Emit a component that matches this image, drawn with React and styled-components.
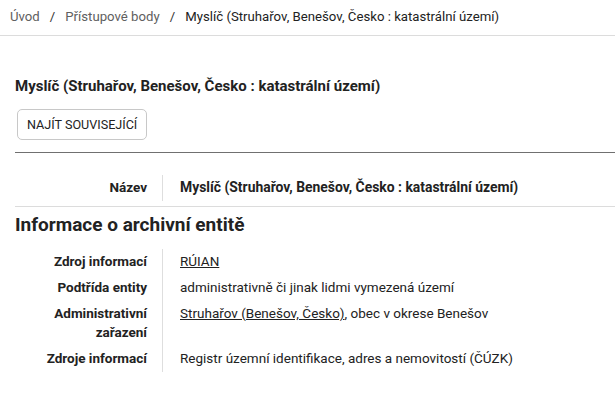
import React from "react";
import styled, { createGlobalStyle } from "styled-components";

const GlobalStyle = createGlobalStyle`
  body {
    margin: 0;
    background: #fff;
    font-family: Roboto, "Liberation Sans", Arial, sans-serif;
    color: #222;
  }
`;

const crumbs = ["Úvod", "Přístupové body"];
const title = "Myslíč (Struhařov, Benešov, Česko : katastrální území)";

export default function App() {
  const info = [
    { label: "Zdroj informací", value: <Link>RÚIAN</Link> },
    { label: "Podtřída entity", value: "administrativně či jinak lidmi vymezená území" },
    {
      label: "Administrativní zařazení",
      value: (
        <>
          <Link>Struhařov (Benešov, Česko)</Link>, obec v okrese Benešov
        </>
      ),
    },
    { label: "Zdroje informací", value: "Registr územní identifikace, adres a nemovitostí (ČÚZK)" },
  ];

  return (
    <>
      <GlobalStyle />
      <Breadcrumbs>
        {crumbs.map((c) => (
          <React.Fragment key={c}>
            <Crumb>{c}</Crumb>
            <Sep>/</Sep>
          </React.Fragment>
        ))}
        <Crumb $current>{title}</Crumb>
      </Breadcrumbs>
      <Main>
        <Title>{title}</Title>
        <Button>NAJÍT SOUVISEJÍCÍ</Button>
        <Rule />
        <NameTable>
          <Row>
            <Label>Název</Label>
            <Value $bold>{title}</Value>
          </Row>
        </NameTable>
        <Section>Informace o archivní entitě</Section>
        <InfoTable>
          {info.map((r) => (
            <Row key={r.label}>
              <Label>{r.label}</Label>
              <Value>{r.value}</Value>
            </Row>
          ))}
        </InfoTable>
      </Main>
    </>
  );
}

const Breadcrumbs = styled.nav`
  display: flex;
  align-items: center;
  gap: 10px;
  height: 36px;
  padding: 0 10px 3px;
  box-sizing: border-box;
  border-bottom: 1px solid #dcdcdc;
  font-size: 13.2px;
`;

const Crumb = styled.span`
  color: ${({ $current }) => ($current ? "#222" : "#606060")};
`;

const Sep = styled.span`
  color: #333;
`;

const Main = styled.main`
  padding: 40px 0 0 15px;
`;

const Title = styled.h1`
  margin: 0 0 13px;
  font-size: 15px;
  line-height: 20px;
  font-weight: 700;
  color: #222;
`;

const Button = styled.button`
  display: block;
  margin-left: 2px;
  height: 31px;
  padding: 0 9px;
  background: #fff;
  border: 1px solid #c8c8c8;
  border-radius: 5px;
  font-family: inherit;
  font-size: 12.6px;
  color: #222;
`;

const Rule = styled.hr`
  margin: 12px 0 0;
  border: 0;
  border-top: 1px solid #707070;
`;

const NameTable = styled.div`
  padding: 22px 0 5px;
  border-bottom: 1px solid #dcdcdc;
`;

const Section = styled.h2`
  margin: 7px 0 13px;
  font-size: 19px;
  line-height: 22px;
  font-weight: 700;
  color: #222;
`;

const InfoTable = styled.div`
  display: flex;
  flex-direction: column;
`;

const Row = styled.div`
  display: grid;
  grid-template-columns: 148px 1fr;
  font-size: 13.5px;
  line-height: 19px;
`;

const Label = styled.div`
  padding: 3px 15px 4px 0;
  text-align: right;
  font-weight: 700;
  color: #222;
  border-right: 1px solid #dedede;
`;

const Value = styled.div`
  padding: 3px 0 4px 17px;
  font-weight: ${({ $bold }) => ($bold ? 700 : 400)};
  font-size: ${({ $bold }) => ($bold ? "13.9px" : "inherit")};
  color: #222;
`;

const Link = styled.a`
  color: #222;
  text-decoration: underline;
  cursor: pointer;
`;
